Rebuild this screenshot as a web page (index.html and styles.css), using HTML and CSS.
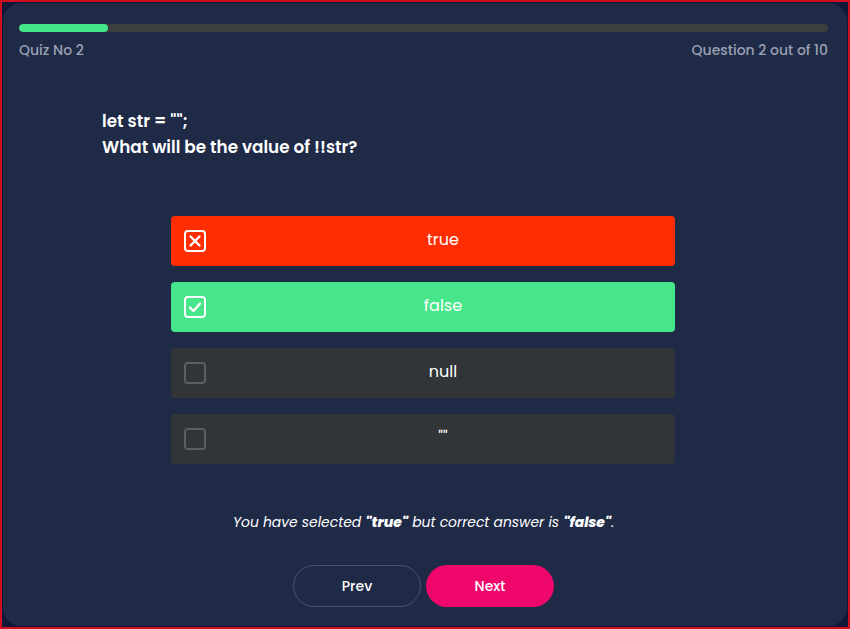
FILE: index.html
```html
<!DOCTYPE html>
<html>
<head>
<meta charset="utf-8">
<link rel="stylesheet" href="styles.css">
</head>
<body>
<div class="frame">
  <div class="card">
    <div class="progress"><div class="progress-fill" style="width:11%"></div></div>
    <div class="meta">
      <span>Quiz No 2</span>
      <span>Question 2 out of 10</span>
    </div>
    <div class="question">
      <div>let str = "";</div>
      <div>What will be the value of !!str?</div>
    </div>
    <div class="options">
      <div class="option wrong">
        <span class="box"><svg viewBox="0 0 22 22" width="22" height="22"><rect x="1" y="1" width="20" height="20" rx="3" fill="none" stroke="#fff" stroke-width="2"/><path d="M6.5 6.5 L15.5 15.5 M15.5 6.5 L6.5 15.5" stroke="#fff" stroke-width="2.4" stroke-linecap="round"/></svg></span>
        <span class="label">true</span>
      </div>
      <div class="option right">
        <span class="box"><svg viewBox="0 0 22 22" width="22" height="22"><rect x="1" y="1" width="20" height="20" rx="3" fill="none" stroke="#fff" stroke-width="2"/><path d="M6 11.5 L9.5 15 L16 7.5" fill="none" stroke="#fff" stroke-width="2.4" stroke-linecap="round" stroke-linejoin="round"/></svg></span>
        <span class="label">false</span>
      </div>
      <div class="option">
        <span class="box"><svg viewBox="0 0 22 22" width="22" height="22"><rect x="1" y="1" width="20" height="20" rx="3" fill="none" stroke="#5b5e62" stroke-width="2"/></svg></span>
        <span class="label">null</span>
      </div>
      <div class="option">
        <span class="box"><svg viewBox="0 0 22 22" width="22" height="22"><rect x="1" y="1" width="20" height="20" rx="3" fill="none" stroke="#5b5e62" stroke-width="2"/></svg></span>
        <span class="label">""</span>
      </div>
    </div>
    <p class="feedback">You have selected <b>"true"</b> but correct answer is <b>"false"</b>.</p>
    <div class="buttons">
      <button class="btn prev">Prev</button>
      <button class="btn next">Next</button>
    </div>
  </div>
</div>
</body>
</html>
```
FILE: styles.css
```css
* { box-sizing: border-box; }
html, body { margin: 0; height: 100%; }
body {
  font-family: "Poppins", "Open Sans", "DejaVu Sans", sans-serif;
  background: #131a3a;
}
.frame {
  height: 629px;
  border: 2px solid #d0101e;
  padding: 1px;
  background: #111837;
}
.card {
  height: 100%;
  background: #1f2a47;
  border-radius: 18px;
  padding: 21px 19px 0 16px;
  color: #fff;
}
.progress {
  height: 8px;
  background: #3b403f;
  border-radius: 4px;
  overflow: hidden;
}
.progress-fill {
  height: 100%;
  background: #45e58c;
  border-radius: 4px;
}
.meta {
  display: flex;
  justify-content: space-between;
  margin-top: 8px;
  font-size: 14px;
  font-weight: 500;
  line-height: 20px;
  color: #9aa0b1;
}
.question {
  margin: 48px 0 0 83px;
  font-size: 16.8px;
  font-weight: 600;
  line-height: 26px;
}
.options {
  width: 504px;
  margin: 56px 0 0 152px;
  display: flex;
  flex-direction: column;
  gap: 16px;
}
.option {
  height: 50px;
  border-radius: 4px;
  background: #323538;
  display: flex;
  align-items: center;
  padding-left: 13px;
}
.option.wrong { background: #ff2d00; }
.option.right { background: #47e68b; }
.box { display: flex; width: 22px; height: 22px; }
.label {
  flex: 1;
  text-align: center;
  font-size: 16px;
  font-weight: 400;
  margin-left: 5px;
  margin-top: -3px;
}
.feedback {
  margin: 48px 0 0;
  text-align: center;
  font-style: italic;
  font-size: 13.9px;
  line-height: 20px;
}
.feedback b { font-weight: 800; }
.buttons {
  display: flex;
  justify-content: center;
  gap: 5px;
  margin-top: 33px;
}
.btn {
  width: 128px;
  height: 42px;
  border-radius: 21px;
  font-family: inherit;
  font-size: 14px;
  font-weight: 500;
  color: #fff;
  cursor: pointer;
}
.prev { background: transparent; border: 1px solid #4b536a; }
.next { background: #f0076b; border: none; }
```
